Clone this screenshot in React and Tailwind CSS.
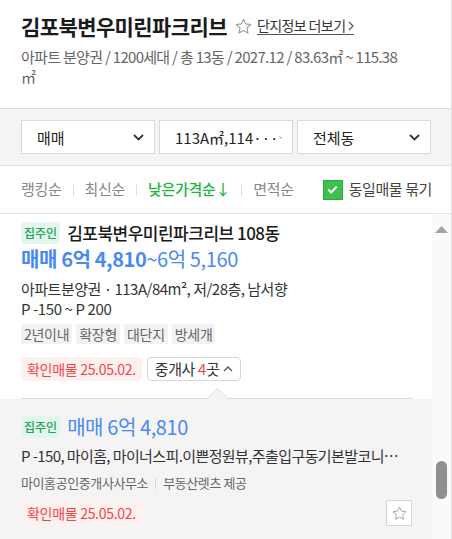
import React from "react";

const FONT = { fontFamily: '"Noto Sans CJK KR", "Noto Sans", sans-serif' };

const StarIcon = ({ size = 18, color = "#9a9a9a" }) => (
  <svg width={size} height={size} viewBox="0 0 24 24" fill="none">
    <path
      d="M12 2.8l2.75 5.9 6.45.75-4.78 4.38 1.28 6.37L12 17.02 6.3 20.2l1.28-6.37L2.8 9.45l6.45-.75z"
      stroke={color}
      strokeWidth="1.4"
      strokeLinejoin="round"
    />
  </svg>
);

const ChevronDown = () => (
  <svg width="11" height="7" viewBox="0 0 11 7" fill="none">
    <path d="M1 1l4.5 4.5L10 1" stroke="#333" strokeWidth="1.8" />
  </svg>
);

const Select = ({ label }) => (
  <div className="w-[134px] h-[34px] bg-white border border-[#d9d9d9] flex items-center justify-between pl-[15px] pr-[10px]">
    <span className="text-[15px] text-[#222] leading-none whitespace-nowrap">{label}</span>
    <ChevronDown />
  </div>
);

const Badge = () => (
  <span className="h-[22px] px-[3px] rounded-[4px] bg-[#e3f6ec] text-[#23a25c] text-[12px] leading-[22px] font-medium">
    집주인
  </span>
);

const Confirm = () => (
  <span className="h-[24px] px-[6px] rounded-[4px] bg-[#fff0f0] text-[#f04646] text-[14px] leading-[24px] tracking-[-0.3px]">
    확인매물 25.05.02.
  </span>
);

const tags = ["2년이내", "확장형", "대단지", "방세개"];

export default function App() {
  return (
    <div style={FONT} className="w-[452px] h-[539px] overflow-hidden bg-white border-r border-[#e0e0e0] text-[#222]">
      {/* Header */}
      <div className="px-[21px] pt-[12px] pb-[21px] border-b border-[#dcdcdc]">
        <div className="flex items-center h-[28px]">
          <h1 className="text-[21px] font-bold leading-[28px] tracking-[-0.6px] text-[#1a1a1a]">김포북변우미린파크리브</h1>
          <span className="ml-[7px] mt-[1px]"><StarIcon size={19} /></span>
          <a className="ml-[4px] flex items-center gap-[3px] text-[14px] text-[#333] border-b border-[#555] leading-[17px] tracking-[-0.6px]">
            단지정보 더보기
            <svg width="6" height="10" viewBox="0 0 6 10" fill="none">
              <path d="M1 1l4 4-4 4" stroke="#555" strokeWidth="1.2" />
            </svg>
          </a>
        </div>
        <p className="mt-[7px] text-[15px] leading-[20px] text-[#666] tracking-[-0.7px]">
          <span className="whitespace-nowrap">아파트 분양권 / 1200세대 / 총 13동 / 2027.12 / 83.63㎡ ~ 115.38</span>
          <br />㎡
        </p>
      </div>

      {/* Filters */}
      <div className="bg-[#f4f4f4] pl-[21px] py-[11px] flex gap-[4px] border-b border-[#e0e0e0]">
        <Select label="매매" />
        <Select label="113A㎡,114···" />
        <Select label="전체동" />
      </div>

      {/* Sort */}
      <div className="h-[48px] px-[21px] flex items-center justify-between border-b border-[#e3e3e3]">
        <div className="flex items-center text-[15px] text-[#888] tracking-[-0.3px]">
          <span>랭킹순</span>
          <span className="mx-[11px] w-px h-[12px] bg-[#ddd]" />
          <span>최신순</span>
          <span className="mx-[11px] w-px h-[12px] bg-[#ddd]" />
          <span className="text-[#1db53c] font-medium">낮은가격순↓</span>
          <span className="mx-[11px] w-px h-[12px] bg-[#ddd]" />
          <span>면적순</span>
        </div>
        <div className="flex items-center gap-[6px] mr-[-2px]">
          <span className="w-[20px] h-[20px] bg-[#3cc24c] border border-[#2fa83e] flex items-center justify-center">
            <svg width="11" height="9" viewBox="0 0 11 9" fill="none">
              <path d="M1.2 4.5l3 3L9.8 1.5" stroke="#fff" strokeWidth="2" />
            </svg>
          </span>
          <span className="text-[15px] text-[#444] tracking-[-0.4px]">동일매물 묶기</span>
        </div>
      </div>

      {/* List */}
      <div className="flex h-[325px]">
        <div className="flex-1 overflow-hidden">
          {/* Item 1 */}
          <div className="pl-[21px] pr-[19px] pt-[7px]">
            <div className="flex items-center gap-[7px] h-[24px]">
              <Badge />
              <span className="text-[17px] font-medium tracking-[-0.5px] text-[#1a1a1a]">김포북변우미린파크리브 108동</span>
            </div>
            <div className="mt-[1px] h-[26px] flex items-center text-[20px] text-[#4a8af0] tracking-[-0.4px]">
              <span className="font-bold">매매 6억 4,810</span>
              <span>~6억 5,160</span>
            </div>
            <p className="mt-[7px] text-[15px] leading-[20px] text-[#333] tracking-[-0.5px]">
              아파트분양권 · 113A/84m², 저/28층, 남서향
            </p>
            <p className="text-[15px] leading-[20px] text-[#333] tracking-[-0.4px]">P -150 ~ P 200</p>
            <div className="mt-[5px] flex gap-[4px]">
              {tags.map((t) => (
                <span key={t} className="h-[20px] px-[3px] bg-[#f2f2f2] text-[14px] leading-[20px] text-[#666] tracking-[-0.3px]">
                  {t}
                </span>
              ))}
            </div>
            <div className="mt-[13px] flex gap-[5px] h-[24px]">
              <Confirm />
              <span className="h-[24px] px-[7px] border border-[#d6d6d6] rounded-[4px] flex items-center gap-[4px] text-[15px] text-[#333] tracking-[-0.4px]">
                중개사 <span className="text-[#f04646] -ml-[1px]">4</span><span className="-ml-[4px]">곳</span>
                <svg width="10" height="6" viewBox="0 0 10 6" fill="none">
                  <path d="M1 5l4-4 4 4" stroke="#555" strokeWidth="1.3" />
                </svg>
              </span>
            </div>
            <div className="relative mt-[17px] h-px bg-[#dcdcdc]">
              <svg className="absolute left-[186px] top-[-10px]" width="21" height="12" viewBox="0 0 21 12">
                <path d="M0 11 L10.5 0.5 L21 11 Z" fill="#f4f4f4" />
                <path d="M0 10.5 L10.5 0.5 L21 10.5" stroke="#dcdcdc" fill="none" />
              </svg>
            </div>
          </div>

          {/* Item 2 */}
          <div className="bg-[#f4f4f4] pl-[21px] pr-[19px] pt-[16px] pb-[20px]">
            <div className="flex items-center gap-[7px] h-[24px]">
              <Badge />
              <span className="text-[20px] text-[#4a8af0] tracking-[-0.4px]">매매 6억 4,810</span>
            </div>
            <p className="mt-[7px] text-[15px] leading-[20px] text-[#333] tracking-[-0.6px] whitespace-nowrap">
              P -150, 마이홈, 마이너스피.이쁜정원뷰,주출입구동기본발코니…
            </p>
            <div className="mt-[8px] flex items-center text-[13px] leading-[18px] text-[#666] tracking-[-0.4px]">
              <span>마이홈공인중개사사무소</span>
              <span className="mx-[7px] w-px h-[11px] bg-[#d5d5d5]" />
              <span>부동산렛츠 제공</span>
            </div>
            <div className="mt-[8px] flex items-center justify-between">
              <Confirm />
              <span className="w-[26px] h-[26px] mr-[1px] bg-white border border-[#d6d6d6] flex items-center justify-center">
                <StarIcon size={17} color="#a8a8a8" />
              </span>
            </div>
          </div>
        </div>

        {/* Scrollbar */}
        <div className="w-[19px] bg-[#fafafa] flex flex-col items-center">
          <svg className="mt-[12px]" width="13" height="7" viewBox="0 0 13 7">
            <path d="M6.5 0L13 7H0z" fill="#a3a3a3" />
          </svg>
          <div className="mt-[228px] w-[11px] h-[38px] rounded-full bg-[#8f8f8f]" />
        </div>
      </div>
    </div>
  );
}
